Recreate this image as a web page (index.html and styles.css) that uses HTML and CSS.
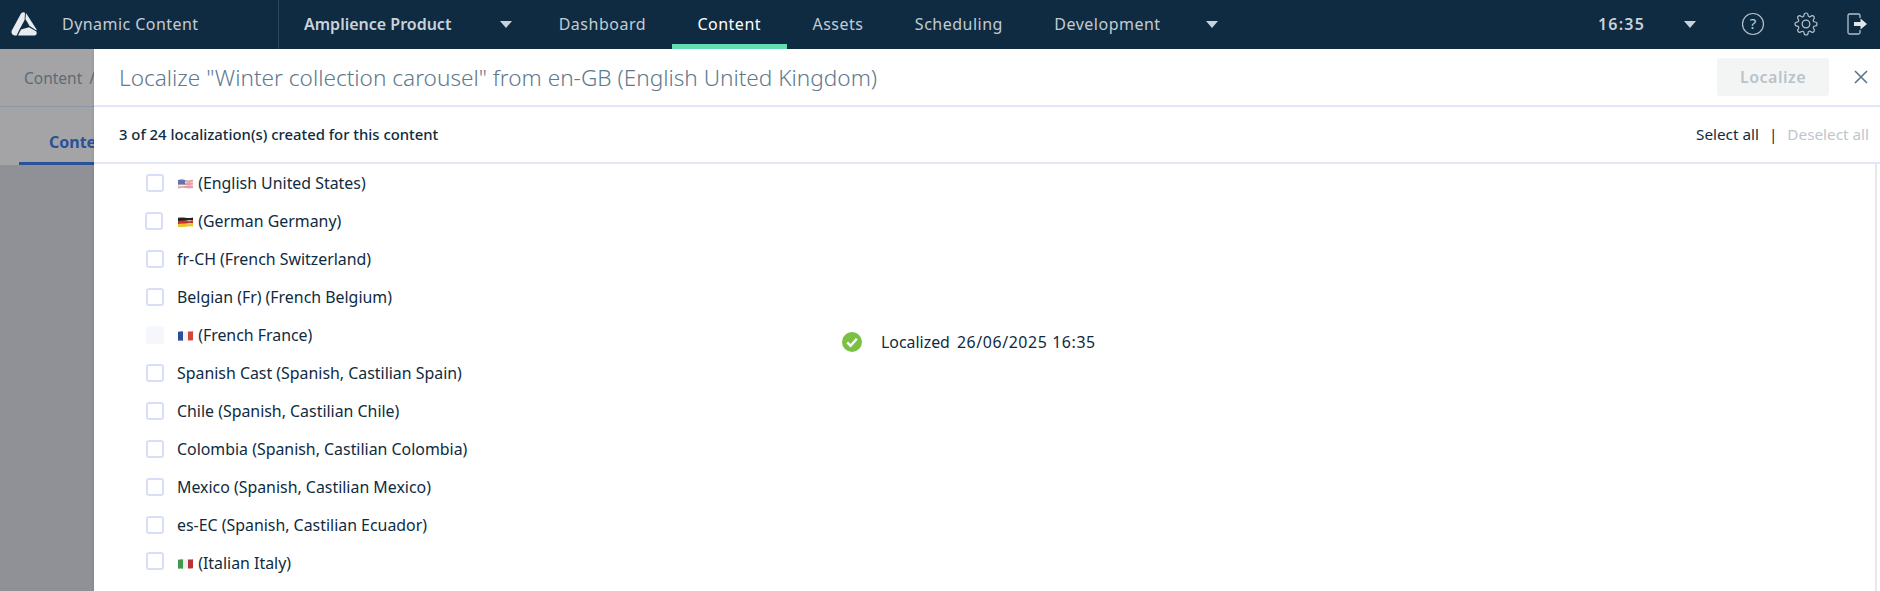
FILE: index.html
```html
<!DOCTYPE html>
<html lang="en">
<head>
<meta charset="utf-8">
<title>Dynamic Content</title>
<link rel="stylesheet" href="styles.css">
</head>
<body>
<div class="app">
  <header class="topbar">
    <div class="brand">
      <svg class="logo" viewBox="0 0 26 24" width="26" height="24"><path d="M10 1.4Q12.2-.4 14 .8L13.6 8 8.6 17.2 5.6 23.4H3.2Q-.6 22.4.8 18.4Z" fill="#e8ecf0"/><path d="M15 1 25.6 17.4Q26 18.4 25 18.2L18.6 14 14.4 7Z" fill="#e8ecf0"/><path d="M7 23.6 10 17.4 18 15.2 25.4 19.6Q26.4 23 23.4 23.6Z" fill="#e8ecf0"/></svg>
      <span class="brand-name">Dynamic Content</span>
    </div>
    <div class="hub"><span class="hub-name">Amplience Product</span><span class="caret"></span></div>
    <nav class="nav">
      <a class="nav-item">Dashboard</a>
      <a class="nav-item active">Content</a>
      <a class="nav-item">Assets</a>
      <a class="nav-item">Scheduling</a>
      <a class="nav-item">Development</a>
      <span class="caret nav-caret"></span>
    </nav>
    <div class="tools">
      <span class="clock">16:35</span><span class="caret clock-caret"></span>
      <svg class="tool" viewBox="0 0 24 24" width="24" height="24"><circle cx="12" cy="12" r="10.5" fill="none" stroke="#b4c0ca" stroke-width="1.2"/><text x="12" y="17" text-anchor="middle" class="qmark">?</text></svg>
      <svg class="tool gear" viewBox="0 0 24 24" width="24" height="24"><circle cx="12" cy="12" r="3.8" fill="none" stroke="#b4c0ca" stroke-width="1.3"/><path d="M19.4 15a1.65 1.65 0 0 0 .33 1.82l.06.06a2 2 0 0 1 0 2.83 2 2 0 0 1-2.83 0l-.06-.06a1.65 1.65 0 0 0-1.82-.33 1.65 1.65 0 0 0-1 1.51V21a2 2 0 0 1-2 2 2 2 0 0 1-2-2v-.09A1.65 1.65 0 0 0 9 19.4a1.65 1.65 0 0 0-1.82.33l-.06.06a2 2 0 0 1-2.83 0 2 2 0 0 1 0-2.83l.06-.06a1.65 1.65 0 0 0 .33-1.82 1.65 1.65 0 0 0-1.51-1H3a2 2 0 0 1-2-2 2 2 0 0 1 2-2h.09A1.65 1.65 0 0 0 4.6 9a1.65 1.65 0 0 0-.33-1.82l-.06-.06a2 2 0 0 1 0-2.83 2 2 0 0 1 2.83 0l.06.06a1.65 1.65 0 0 0 1.82.33H9a1.65 1.65 0 0 0 1-1.51V3a2 2 0 0 1 2-2 2 2 0 0 1 2 2v.09a1.65 1.65 0 0 0 1 1.51 1.65 1.65 0 0 0 1.82-.33l.06-.06a2 2 0 0 1 2.83 0 2 2 0 0 1 0 2.83l-.06.06a1.65 1.65 0 0 0-.33 1.82V9a1.65 1.65 0 0 0 1.51 1H21a2 2 0 0 1 2 2 2 2 0 0 1-2 2h-.09a1.65 1.65 0 0 0-1.51 1z" fill="none" stroke="#b4c0ca" stroke-width="1.2" stroke-linejoin="round"/></svg>
      <svg class="tool exit" viewBox="0 0 24 24" width="24" height="24"><path d="M15 6V3.5Q15 2 13.5 2H4.5Q3 2 3 3.5V20.5Q3 22 4.5 22H13.5Q15 22 15 20.5V18" fill="none" stroke="#b4c0ca" stroke-width="1.3"/><path d="M9 10H15.5V6.5L22 12L15.5 17.5V14H9Z" fill="#dfe5ea"/></svg>
    </div>
  </header>
  <main class="page">
    <div class="crumbs">Content<span class="crumb-sep">/</span></div>
    <div class="tabs"><span class="tab">Content</span></div>
    <div class="scrim"></div>
    <section class="panel">
      <div class="panel-head">
        <h1 class="panel-title">Localize "Winter collection carousel" from en-GB (English United Kingdom)</h1>
        <button class="localize">Localize</button>
        <svg class="close" viewBox="0 0 16 16" width="16" height="16"><path d="M2 2L14 14M14 2L2 14" stroke="#5d7487" stroke-width="1.6" fill="none"/></svg>
      </div>
      <div class="panel-sub">
        <span class="count">3 of 24 localization(s) created for this content</span>
        <span class="select-links"><a class="sel">Select all</a><span class="sep">|</span><a class="desel">Deselect all</a></span>
      </div>
      <div class="list-area">
        <ul class="locales">
          <li class="locale"><span class="box"></span><span class="label"><svg class="flag" viewBox="0 0 15 10" width="15" height="10"><path d="M0 1Q4 0 7.5 1T15 .6V9Q11 9.8 7.5 9T0 9.4Z" fill="#e2a0a6"/><path d="M0 3Q4 2 7.5 3T15 2.6V3.8Q11 3.2 7.5 4T0 4.2ZM0 6Q4 5.4 7.5 6T15 5.6V6.8Q11 6.2 7.5 7T0 7.2Z" fill="#f3e8e8"/><path d="M0 1Q3 .3 7 .9V5.4Q3 5 0 5.6Z" fill="#5b76b0"/></svg> (English United States)</span></li>
          <li class="locale"><span class="box shift"></span><span class="label"><svg class="flag" viewBox="0 0 15 10" width="15" height="10"><path d="M0 .8Q4 0 7.5 .8T15 .4V3.6Q11 3 7.5 3.8T0 4Z" fill="#222"/><path d="M0 4Q4 3 7.5 3.8T15 3.6V6.6Q11 6 7.5 6.8T0 7Z" fill="#c8342a"/><path d="M0 7Q4 6 7.5 6.8T15 6.6V9.4Q11 9 7.5 9.8T0 10Z" fill="#eec22e"/></svg> (German Germany)</span></li>
          <li class="locale"><span class="box"></span><span class="label">fr-CH (French Switzerland)</span></li>
          <li class="locale"><span class="box"></span><span class="label">Belgian (Fr) (French Belgium)</span></li>
          <li class="locale"><span class="box done"></span><span class="label"><svg class="flag" viewBox="0 0 15 10" width="15" height="10"><path d="M0 .8Q3 .2 5 .4V9.8Q3 9.4 0 9.8Z" fill="#2b4d9b"/><path d="M5 .4Q8 .6 10 .5V9.6Q8 9.8 5 9.8Z" fill="#f2f2f6"/><path d="M10 .5Q13 .4 15 .2V9.2Q13 9.4 10 9.6Z" fill="#d4453a"/></svg> (French France)</span>
            <span class="status"><svg class="tick" viewBox="0 0 20 20" width="20" height="20"><circle cx="10" cy="10" r="10" fill="#7ac143"/><path d="M5.2 10.4L8.6 13.8L14.8 6.8" fill="none" stroke="#fff" stroke-width="2.4"/></svg><span class="status-word">Localized</span><span class="status-date">26/06/2025 16:35</span></span></li>
          <li class="locale"><span class="box"></span><span class="label">Spanish Cast (Spanish, Castilian Spain)</span></li>
          <li class="locale"><span class="box"></span><span class="label">Chile (Spanish, Castilian Chile)</span></li>
          <li class="locale"><span class="box"></span><span class="label">Colombia (Spanish, Castilian Colombia)</span></li>
          <li class="locale"><span class="box"></span><span class="label">Mexico (Spanish, Castilian Mexico)</span></li>
          <li class="locale"><span class="box"></span><span class="label">es-EC (Spanish, Castilian Ecuador)</span></li>
          <li class="locale"><span class="box lift"></span><span class="label"><svg class="flag" viewBox="0 0 15 10" width="15" height="10"><path d="M0 .8Q3 .2 5 .4V9.8Q3 9.4 0 9.8Z" fill="#3f9a4f"/><path d="M5 .4Q8 .6 10 .5V9.6Q8 9.8 5 9.8Z" fill="#eef0ee"/><path d="M10 .5Q13 .4 15 .2V9.2Q13 9.4 10 9.6Z" fill="#b8323a"/></svg> (Italian Italy)</span></li>
        </ul>
      </div>
    </section>
  </main>
</div>
</body>
</html>
```
FILE: styles.css
```css
* { box-sizing: border-box; }
html, body { margin: 0; padding: 0; height: 100%; overflow: hidden; }
body { font-family: "Noto Sans", "Liberation Sans", sans-serif; color: #0f2b41; background: #fff; }
.app { display: flex; flex-direction: column; height: 591px; }

.topbar { height: 49px; flex: none; display: flex; align-items: center; background: #0f2b41; color: #c3ccd4; font-size: 16px; }
.brand { width: 279px; height: 100%; flex: none; display: flex; align-items: center; padding: 0 0 1px 11px; border-right: 1px solid #2d4659; }
.logo { flex: none; }
.brand-name { margin-left: 25px; letter-spacing: .45px; }
.hub { display: flex; align-items: center; padding: 0 0 1px 25px; width: 254px; flex: none; height: 100%; }
.hub-name { font-weight: 600; color: #c9d2d9; }
.caret { width: 0; height: 0; border-left: 6px solid transparent; border-right: 6px solid transparent; border-top: 7px solid #c9d2d9; flex: none; }
.hub .caret { margin-left: auto; margin-right: 21px; }
.nav { display: flex; align-items: center; height: 100%; flex: none; }
.nav-item { display: flex; align-items: center; height: 100%; padding: 4px 25.7px 0; border-bottom: 5px solid transparent; letter-spacing: .5px; }
.nav-item.active { color: #fff; border-bottom-color: #62dcb0; }
.nav-caret { margin: 0 0 1px 20px; }
.tools { margin-left: auto; display: flex; align-items: center; height: 100%; padding: 0 11px 1px 0; }
.clock { font-weight: 600; color: #c9d2d9; letter-spacing: 1.2px; }
.clock-caret { margin-left: 39px; margin-right: 45px; }
.tool { flex: none; }
.gear { margin-left: 29px; }
.exit { margin-left: 27px; }
.qmark { font-size: 15px; fill: #c3ccd4; font-family: "Noto Sans", sans-serif; }

.page { position: relative; flex: 1; min-height: 0; background: #fff; overflow: hidden; }
.crumbs { height: 58px; padding: 18px 24px 0; font-size: 15.5px; color: #5d6b76; border-bottom: 1px solid #8b98a5; background: #a4a4a6; }
.crumb-sep { margin-left: 7px; }
.tabs { height: 58px; padding-left: 19px; background: #a4a4a6; }
.tab { display: inline-block; height: 58px; padding: 24px 30px 0; font-weight: 700; font-size: 16px; color: #2a5299; border-bottom: 3px solid #2a5299; }
.scrim { position: absolute; left: 0; right: 0; top: 116px; bottom: 0; background: #909196; }

.panel { position: absolute; left: 94px; right: 0; top: 0; bottom: 0; background: #fff; display: flex; flex-direction: column; box-shadow: -1px 0 2px rgba(0,0,0,.08); }
.panel-head { height: 58px; flex: none; display: flex; align-items: center; padding: 0 11px 0 25px; border-bottom: 2px solid #e3e6f8; }
.panel-title { margin: 0; flex: 1; font-size: 22.6px; font-weight: 300; color: #5f7a8e; }
.localize { width: 112px; height: 38px; margin-right: 24px; border: 0; border-radius: 3px; background: #f3f5f5; color: #b9c3ca; font: 600 16px "Noto Sans", sans-serif; letter-spacing: .5px; }
.panel-sub { height: 57px; flex: none; display: flex; align-items: center; justify-content: space-between; padding: 0 11px 2px 25px; font-size: 15.3px; border-bottom: 2px solid #e3e6f8; }
.count { font-weight: 500; font-size: 14.85px; }
.sel { color: #0f2b41; }
.sep { margin: 0 10px; }
.desel { color: #bcc6cd; }
.list-area { flex: 1; min-height: 0; border-right: 2px solid #e8e8ea; margin-right: 3px; }
.locales { list-style: none; margin: 0; padding: 0; }
.locale { position: relative; height: 38px; display: flex; align-items: center; font-size: 15.9px; color: #0f2b41; padding-left: 52px; }
.box { width: 18px; height: 18px; flex: none; border: 2px solid #d9def8; border-radius: 3px; background: #fff; margin-right: 13px; }
.box.shift { transform: translateX(-1px); }
.box.lift { transform: translateY(-2px); }
.box.done { border-color: #f6f7fc; background: #f6f7fc; }
.label { padding-bottom: 1px; }
.flag { vertical-align: 0; margin: 0 1px; }
.status { position: absolute; left: 748px; top: 15px; display: flex; align-items: center; gap: 7px; }
.tick { margin-right: 12px; }
.status-date { letter-spacing: .6px; }
```
